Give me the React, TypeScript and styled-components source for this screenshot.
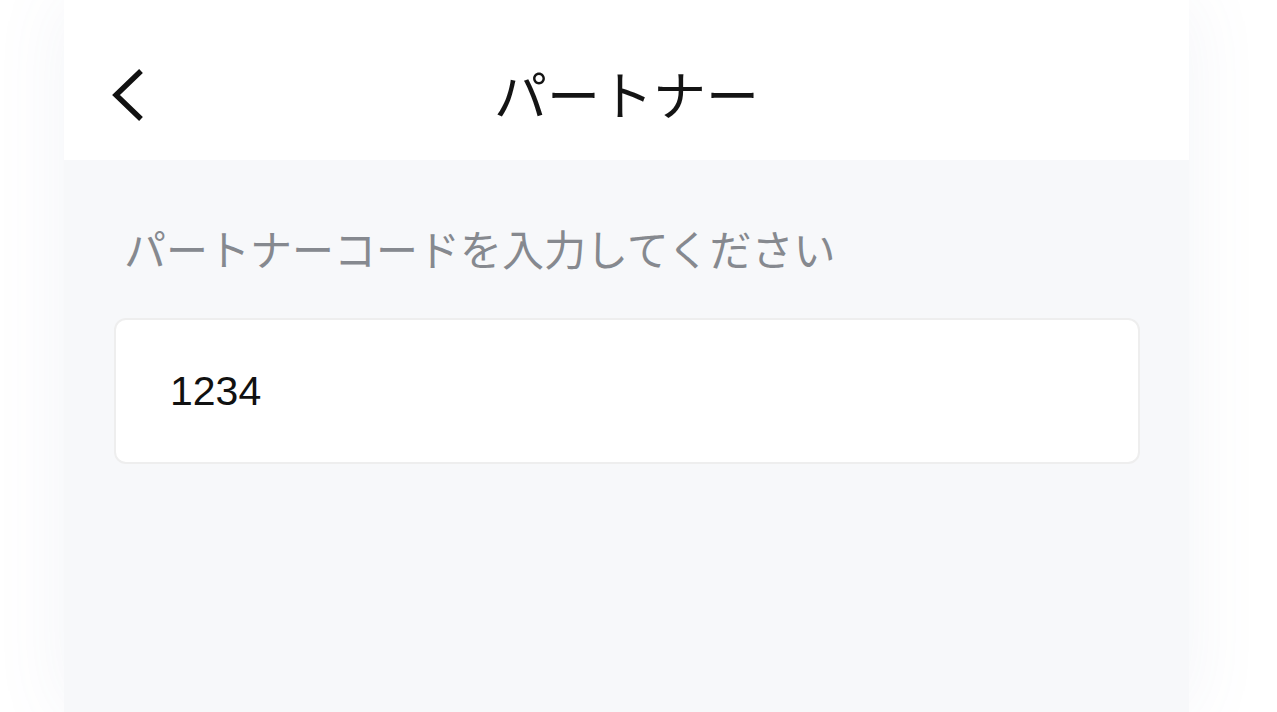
import styled, { createGlobalStyle } from "styled-components";

const GlobalStyle = createGlobalStyle`
  html, body {
    margin: 0;
    padding: 0;
    background: #ffffff;
    font-family: "Noto Sans CJK JP", "Noto Sans", sans-serif;
  }
`;

const Page = styled.div`
  display: flex;
  justify-content: flex-start;
  padding-left: 64px;
  height: 712px;
  overflow: hidden;
`;

const Screen = styled.div`
  width: 1125px;
  display: flex;
  flex-direction: column;
  background: #f7f8fa;
  box-shadow: 0 0 70px rgba(100, 115, 170, 0.08);
`;

const Header = styled.header`
  height: 160px;
  box-sizing: border-box;
  padding: 26px 48px 0;
  background: #ffffff;
  display: grid;
  grid-template-columns: 80px 1fr 80px;
  align-items: center;
`;

const BackButton = styled.button`
  border: 0;
  background: none;
  padding: 0;
  width: 40px;
  height: 56px;
  margin-top: 4px;
  display: flex;
  align-items: center;
  cursor: pointer;
`;

const Title = styled.h1`
  margin: 0;
  text-align: center;
  font-size: 53px;
  font-weight: 400;
  line-height: 1.3;
  color: #141414;
  letter-spacing: 0;
`;

const Body = styled.main`
  flex: 1;
  padding: 58px 49px 0 50px;
  display: flex;
  flex-direction: column;
  gap: 40px;
`;

const Label = styled.p`
  margin: 0;
  padding-left: 10px;
  font-size: 42px;
  line-height: 60px;
  color: #86898f;
`;

const Field = styled.div`
  height: 146px;
  box-sizing: border-box;
  border: 2px solid #eeeeee;
  border-radius: 12px;
  background: #ffffff;
  display: flex;
  align-items: center;
  padding-left: 54px;
`;

const Value = styled.span`
  font-family: "Liberation Sans", Arial, sans-serif;
  font-size: 41px;
  color: #111111;
`;

export default function App() {
  return (
    <>
      <GlobalStyle />
      <Page>
        <Screen>
          <Header>
            <BackButton aria-label="戻る">
              <svg width="34" height="54" viewBox="0 0 34 54" fill="none">
                <path
                  d="M29 3 L4 27 L29 51"
                  stroke="#111111"
                  strokeWidth="5.4"
                  strokeLinecap="butt"
                  strokeLinejoin="miter"
                />
              </svg>
            </BackButton>
            <Title>パートナー</Title>
            <span />
          </Header>
          <Body>
            <Label>パートナーコードを入力してください</Label>
            <Field>
              <Value>1234</Value>
            </Field>
          </Body>
        </Screen>
      </Page>
    </>
  );
}
